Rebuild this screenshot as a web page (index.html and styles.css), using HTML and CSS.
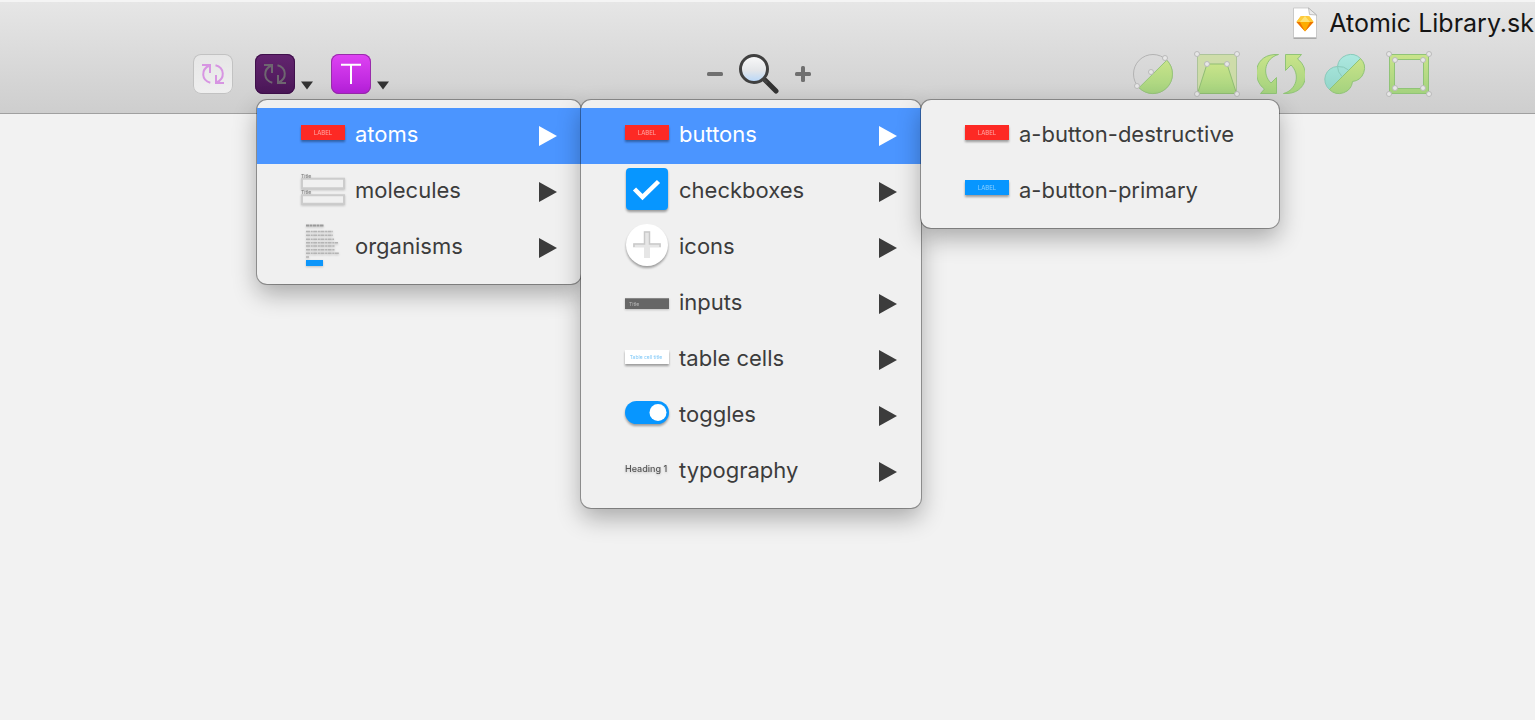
FILE: index.html
```html
<!DOCTYPE html>
<html lang="en">
<head>
<meta charset="utf-8">
<title>Atomic Library</title>
<link rel="stylesheet" href="styles.css">
</head>
<body>
<svg class="defs" width="0" height="0" aria-hidden="true">
  <defs>
    <linearGradient id="green" x1="0" y1="0" x2="0" y2="1"><stop offset="0" stop-color="#c9e48a"/><stop offset="1" stop-color="#a4d27e"/></linearGradient>
    <linearGradient id="teal" x1="0" y1="0" x2="0" y2="1"><stop offset="0" stop-color="#ade9e0"/><stop offset="1" stop-color="#93d6ca"/></linearGradient>
    <linearGradient id="lens" x1="0" y1="0" x2="0" y2="1"><stop offset="0" stop-color="#fafafa"/><stop offset=".55" stop-color="#e4e6e9"/><stop offset="1" stop-color="#b5d6fa"/></linearGradient>
    <symbol id="sync" viewBox="0 0 40 40">
      <g fill="none" stroke="currentColor" stroke-width="2">
        <path d="M9 11h8v8M16.500 11.500C7.500 15.500 8.500 26.500 17.300 28.700M31 29h-8v-8M23.500 28.500C32.500 24.500 31.500 13.500 22.500 11.200"/>
      </g>
    </symbol>
  </defs>
</svg>
<header class="window-bar">
  <h1 class="title">
    <svg width="24" height="32" viewBox="0 0 24 32" aria-hidden="true">
      <path d="M.5 2h16.500L23.500 8v24H.5z" fill="#aaa"/>
      <path d="M.5 1h15L23.500 8v22.500H.5z" fill="#fff" stroke="#bdbdbd" stroke-width=".7"/>
      <path d="M15.500 1 16.500 7.500 23.500 8z" fill="#ececec" stroke="#aaa" stroke-width=".7"/>
      <path d="M7.500 9.500 12 9l4.500.5 4 5.500L12 24.500 3.500 15z" fill="#fdad00"/>
      <path d="M7.500 9.500 12 9l4.500.5 4 5.500h-17z" fill="#fecb3b"/>
      <path d="M12 9l5 6H7z" fill="#fee375"/>
      <path d="M3.500 15H7l5 9.500zM20.500 15H17l-5 9.500z" fill="#ee7200"/>
    </svg>
    <span>Atomic Library.sk</span>
  </h1>
  <nav class="toolbar" aria-label="Toolbar">
    <div class="group symbols">
      <button class="tool light" aria-label="Create symbol"><svg width="40" height="40"><use href="#sync"/></svg></button>
      <div class="split">
        <button class="tool dark" aria-label="Insert symbol"><svg width="40" height="40"><use href="#sync"/></svg></button>
        <button class="drop" aria-label="Symbol menu"><svg width="12" height="9"><path d="M0 .5h12L6 8.500z" fill="#333"/></svg></button>
        <div class="menus">
          <ul class="menu menu-root" role="menu">
            <li role="none"><button class="item active" role="menuitem">
              <svg class="thumb raised" viewBox="0 0 44 44"><rect y="13" width="44" height="15" fill="#fd2924"/><text x="22" y="23" class="tiny red-label">LABEL</text></svg>
              <span>atoms</span><svg class="arrow" viewBox="0 0 18 20"><path d="M0 0v20l18-10z"/></svg></button></li>
            <li role="none"><button class="item" role="menuitem">
              <svg class="thumb raised faint" viewBox="0 0 44 44"><path d="M1 10.800h42v9.500H1zM1 27.300h42v8.500H1z" fill="#f0f0f0" stroke="#ccc" stroke-width="2"/><text x="0" y="10" class="micro">Title</text><text x="0" y="26" class="micro">Title</text></svg>
              <span>molecules</span><svg class="arrow" viewBox="0 0 18 20"><path d="M0 0v20l18-10z"/></svg></button></li>
            <li role="none"><button class="item" role="menuitem">
              <svg class="thumb raised faint" viewBox="0 0 44 44"><path d="M5 1.500h18" stroke="#999" stroke-width="2" stroke-dasharray="3 .5"/><path d="M5 7.500h27M5 11.300h27M5 15.200h28M5 18.800h32M5 22h29M5 25.700h29M5 29.200h33M5 33h3" stroke="#b4b4b4" stroke-width="1.500" stroke-dasharray="4 .7 2 .5"/><path d="M5 36h17v6H5z" fill="#0d96fa"/></svg>
              <span>organisms</span><svg class="arrow" viewBox="0 0 18 20"><path d="M0 0v20l18-10z"/></svg></button></li>
          </ul>
          <ul class="menu menu-atoms" role="menu">
            <li role="none"><button class="item active" role="menuitem">
              <svg class="thumb raised" viewBox="0 0 44 44"><rect y="13" width="44" height="15" fill="#fd2924"/><text x="22" y="23" class="tiny red-label">LABEL</text></svg>
              <span>buttons</span><svg class="arrow" viewBox="0 0 18 20"><path d="M0 0v20l18-10z"/></svg></button></li>
            <li role="none"><button class="item" role="menuitem">
              <svg class="thumb raised" viewBox="0 0 44 44"><rect x="1" width="42" height="42" rx="4" fill="#0796ff"/><path d="M9.500 21l8 8L33.500 13.500" fill="none" stroke="#fff" stroke-width="4.500"/></svg>
              <span>checkboxes</span><svg class="arrow" viewBox="0 0 18 20"><path d="M0 0v20l18-10z"/></svg></button></li>
            <li role="none"><button class="item" role="menuitem">
              <svg class="thumb raised" viewBox="0 0 44 44"><circle cx="22" cy="21" r="21" fill="#fff"/><path d="M19 7.500h6v12h11v4H25V34h-6V23.500H8v-4h11z" fill="#e6e6e6"/><path d="M9 23v-3h10.500V8h5v12H35v3" fill="none" stroke="#c9c9c9" stroke-width="1.500"/></svg>
              <span>icons</span><svg class="arrow" viewBox="0 0 18 20"><path d="M0 0v20l18-10z"/></svg></button></li>
            <li role="none"><button class="item" role="menuitem">
              <svg class="thumb raised faint" viewBox="0 0 44 44"><rect y="18" width="44" height="11" fill="#666"/><path d="M0 18.500h44" stroke="#888"/><text x="4" y="26" class="micro pale">Title</text></svg>
              <span>inputs</span><svg class="arrow" viewBox="0 0 18 20"><path d="M0 0v20l18-10z"/></svg></button></li>
            <li role="none"><button class="item" role="menuitem">
              <svg class="thumb raised" viewBox="0 0 44 44"><rect y="14" width="44" height="14" fill="#fff"/><text x="21" y="23" class="tiny cell-label">Table cell title</text></svg>
              <span>table cells</span><svg class="arrow" viewBox="0 0 18 20"><path d="M0 0v20l18-10z"/></svg></button></li>
            <li role="none"><button class="item" role="menuitem">
              <svg class="thumb raised" viewBox="0 0 44 44"><rect y="9" width="44" height="23" rx="11.500" fill="#0796ff"/><circle cx="33" cy="20.500" r="8.500" fill="#fff"/></svg>
              <span>toggles</span><svg class="arrow" viewBox="0 0 18 20"><path d="M0 0v20l18-10z"/></svg></button></li>
            <li role="none"><button class="item" role="menuitem">
              <svg class="thumb raised faint" viewBox="0 0 44 44"><text x="0" y="24" class="heading-label">Heading 1</text></svg>
              <span>typography</span><svg class="arrow" viewBox="0 0 18 20"><path d="M0 0v20l18-10z"/></svg></button></li>
          </ul>
          <ul class="menu menu-buttons" role="menu">
            <li role="none"><button class="item" role="menuitem">
              <svg class="thumb raised" viewBox="0 0 44 44"><rect y="13" width="44" height="15" fill="#fd2924"/><text x="22" y="23" class="tiny red-label">LABEL</text></svg>
              <span>a-button-destructive</span></button></li>
            <li role="none"><button class="item" role="menuitem">
              <svg class="thumb raised" viewBox="0 0 44 44"><rect y="12" width="44" height="15" fill="#0796ff"/><text x="22" y="22" class="tiny blue-label">LABEL</text></svg>
              <span>a-button-primary</span></button></li>
          </ul>
        </div>
      </div>
      <div class="split">
        <button class="tool pink" aria-label="Insert text"><svg width="40" height="40"><path d="M10 10.800h20M20 10.800V30" fill="none" stroke="#fff" stroke-width="2"/></svg></button>
        <button class="drop" aria-label="Text menu"><svg width="12" height="9"><path d="M0 .5h12L6 8.500z" fill="#333"/></svg></button>
      </div>
    </div>
    <div class="group zoom">
      <button class="plain" aria-label="Zoom out"><svg width="16" height="16"><rect y="6" width="16" height="4" rx="1.500" fill="#707070"/></svg></button>
      <button class="plain" aria-label="Zoom"><svg width="40" height="42" viewBox="0 0 40 42"><path d="M26.500 27.500l10.500 10.500" stroke="#333" stroke-width="5" stroke-linecap="round"/><path d="M23 25l5 5" stroke="#444" stroke-width="3"/><circle cx="15" cy="16" r="13.500" fill="url(#lens)" stroke="#404040" stroke-width="3"/></svg></button>
      <button class="plain" aria-label="Zoom in"><svg width="16" height="16"><rect y="6" width="16" height="4" rx="1.500" fill="#707070"/><rect x="6" width="4" height="16" rx="1.500" fill="#707070"/></svg></button>
    </div>
    <div class="group edit">
      <button class="plain" aria-label="Edit"><svg width="48" height="48"><circle cx="24" cy="24" r="19.500" fill="none" stroke="#b3b3b3"/><path d="M10 37.800 37.800 10.200A19.500 19.500 0 0 1 10 37.800z" fill="url(#green)" stroke="#96c679"/><g class="knob"><circle cx="8" cy="36" r="2.500"/><circle cx="22" cy="22" r="2.500"/><circle cx="36" cy="8" r="2.500"/></g></svg></button>
      <button class="plain" aria-label="Transform"><svg width="48" height="48"><path d="M4.500 4.500h39v39h-39z" fill="#c9df91" opacity=".65" stroke="#96b979"/><path d="M14 14h20l9.500 29.500h-39z" fill="url(#green)" stroke="#90bd74"/><g class="knob"><circle cx="4" cy="4" r="2.500"/><circle cx="44" cy="4" r="2.500"/><circle cx="14" cy="14" r="2.500"/><circle cx="34" cy="14" r="2.500"/><circle cx="4" cy="44" r="2.500"/><circle cx="44" cy="44" r="2.500"/></g></svg></button>
      <button class="plain" aria-label="Rotate"><svg width="48" height="48"><g fill="url(#green)" stroke="#90c477"><path d="M21.500 4.500C-4 3-5.500 30 7.500 39L3.500 43.500h16v-16L14 33C4.500 24 8 8 21.500 4.500z"/><path d="M26.500 43.500C52 45 53.500 18 40.500 9L44.500 4.500h-16v16L34 15C43.500 24 40 40 26.500 43.500z"/></g></svg></button>
      <button class="plain" aria-label="Combine"><svg width="48" height="48"><path d="M8.500 39.500A13 13 0 0 1 16.500 16.500 13.500 13.500 0 0 1 39.500 8.500z" fill="url(#teal)" stroke="#8acabb"/><path d="M8.500 39.500 39.500 8.500A13.500 13.500 0 0 1 31.500 31.500 13.500 13.500 0 0 1 8.500 39.500z" fill="url(#green)" stroke="#90c477"/><path d="M16.500 16.500Q16.500 22 21 26.500M16.500 16.500Q23 16 27.500 20" fill="none" stroke="#8acabb"/></svg></button>
      <button class="plain" aria-label="Resize frame"><svg width="48" height="48"><path d="M4.500 4.500h39v39h-39zM9.500 9.500v29h29v-29z" fill="url(#green)" fill-rule="evenodd" stroke="#90c477"/><g class="knob"><circle cx="4" cy="4" r="2.500"/><circle cx="44" cy="4" r="2.500"/><circle cx="10" cy="10" r="2.500"/><circle cx="38" cy="10" r="2.500"/><circle cx="10" cy="38" r="2.500"/><circle cx="38" cy="38" r="2.500"/><circle cx="4" cy="44" r="2.500"/><circle cx="44" cy="44" r="2.500"/></g></svg></button>
    </div>
  </nav>
</header>
</body>
</html>
```

FILE: styles.css
```css
* { box-sizing: border-box; }
body {
  margin: 0;
  min-height: 100vh;
  overflow: hidden;
  background: #f2f2f2;
  color: #3c3c3c;
  font-family: Inter, "Noto Sans", sans-serif;
}
button {
  padding: 0;
  border: 0;
  background: none;
  color: inherit;
  font: inherit;
}
svg { display: block; flex: none; }
.defs { position: absolute; }

.window-bar {
  padding-bottom: 15px;
  border-top: 2px solid #f4f4f4;
  border-bottom: 1px solid #a0a0a0;
  background: linear-gradient(#e6e6e6, #cecece);
}
.title {
  display: flex;
  justify-content: flex-end;
  align-items: center;
  gap: 12px;
  height: 42px;
  margin: 0;
  padding-right: 1px;
  color: #151515;
  font-size: 25px;
  font-weight: 400;
  line-height: 32px;
  white-space: nowrap;
}
.toolbar {
  display: flex;
  justify-content: space-between;
  align-items: center;
  height: 54px;
  padding: 6px 102px 0 193px;
}
.group { display: flex; align-items: center; gap: 16px; }
.symbols { gap: 18px; }
.split {
  position: relative;
  display: flex;
  align-items: flex-end;
  gap: 6px;
}
.tool {
  width: 40px;
  height: 40px;
  border-radius: 8px;
}
.light {
  margin-right: 4px;
  background: linear-gradient(#e6e6e6, #efefef);
  box-shadow: inset 0 0 0 1px #c2c2c2;
  color: #d795e2;
}
.dark {
  background: linear-gradient(#63246f, #4a1757);
  box-shadow: inset 0 0 0 1px #3f104b;
  color: #6e6670;
}
.pink {
  background: linear-gradient(#df43f3, #b31fd8);
  box-shadow: inset 0 0 0 1px #982caa;
}
.drop { margin-bottom: 4px; }
.knob circle { fill: #e7e7e7; stroke: #bababa; }

.menus {
  position: absolute;
  top: 46px;
  left: 2px;
  z-index: 1;
  display: flex;
  align-items: flex-start;
}
.menu {
  position: relative;
  margin: 0;
  padding: 8px 0;
  border-radius: 10px;
  background: #f0f0f0;
  box-shadow: 0 0 0 1px rgba(0, 0, 0, .32), 0 10px 24px rgba(0, 0, 0, .3);
  list-style: none;
}
.menu-root { width: 324px; }
.menu-atoms { width: 340px; }
.menu-buttons { width: 358px; }
.item {
  display: flex;
  align-items: center;
  gap: 10px;
  width: 100%;
  height: 56px;
  padding: 0 24px 4px 44px;
  font-size: 22px;
  line-height: 28px;
  text-align: left;
  white-space: nowrap;
}
.active { background: #4b95ff; color: #fff; }
.thumb { width: 44px; height: 44px; }
.raised { filter: drop-shadow(0 2px 1px rgba(0, 0, 0, .35)); }
.faint { filter: drop-shadow(0 1px 1px rgba(0, 0, 0, .2)); }
.arrow {
  width: 18px;
  height: 20px;
  margin: 4px 0 0 auto;
  fill: currentColor;
}
.tiny { font-size: 6px; text-anchor: middle; }
.micro { font-size: 5px; fill: #777; }
.pale { fill: #bbb; }
.red-label { fill: #ffaaa6; }
.blue-label { fill: #8cd0ff; }
.cell-label { font-size: 5px; fill: #7ec8f8; }
.heading-label { font-size: 9px; font-weight: 500; fill: #555; }
```
